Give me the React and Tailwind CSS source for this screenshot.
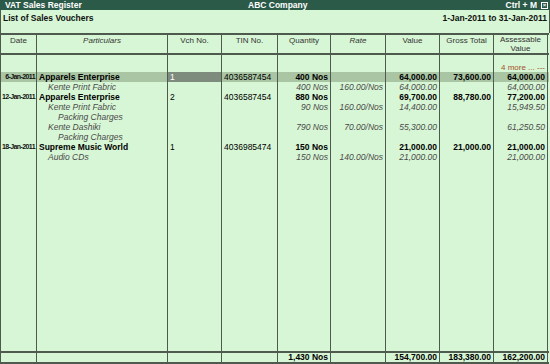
const cols = "grid grid-cols-[36px_131px_54px_56px_53px_55px_54px_54px_54px]";
const cell = "border-r border-[#4d5a4d] overflow-hidden whitespace-nowrap";

const rows = [
    { date: "6-Jan-2011", party: "Apparels Enterprise", vch: "1", tin: "4036587454", qty: "400 Nos", value: "64,000.00", gross: "73,600.00", assess: "64,000.00", bold: true, active: true },
    { party: "Kente Print Fabric", indent: 1, qty: "400 Nos", rate: "160.00/Nos", value: "64,000.00", assess: "64,000.00" },
    { date: "12-Jan-2011", party: "Apparels Enterprise", vch: "2", tin: "4036587454", qty: "880 Nos", value: "69,700.00", gross: "88,780.00", assess: "77,200.00", bold: true },
    { party: "Kente Print Fabric", indent: 1, qty: "90 Nos", rate: "160.00/Nos", value: "14,400.00", assess: "15,949.50" },
    { party: "Packing Charges", indent: 2 },
    { party: "Kente Dashiki", indent: 1, qty: "790 Nos", rate: "70.00/Nos", value: "55,300.00", assess: "61,250.50" },
    { party: "Packing Charges", indent: 2 },
    { date: "18-Jan-2011", party: "Supreme Music World", vch: "1", tin: "4036985474", qty: "150 Nos", value: "21,000.00", gross: "21,000.00", assess: "21,000.00", bold: true },
    { party: "Audio CDs", indent: 1, qty: "150 Nos", rate: "140.00/Nos", value: "21,000.00", assess: "21,000.00" },
];

function Row({ r }) {
    const txt = r.bold ? "font-bold text-black" : "italic text-[#4a4a4a]";
    const pad = r.indent === 2 ? "pl-[21px]" : r.indent === 1 ? "pl-[11px]" : "pl-[2px]";
    return (
        <div className={`${cols} h-[10px] leading-[10px] ${r.active ? "bg-[#a9c5a3]" : ""}`}>
            <div className={`${cell} text-right pr-[1px] tracking-[-0.6px] text-[7px] font-bold text-[#111]`}>{r.date}</div>
            <div className={`${cell} ${pad} ${txt}`}>{r.party}</div>
            <div className={`${cell} pl-[2px] ${r.active ? "bg-[#7e8c7e] text-white" : "text-black"}`}>{r.vch}</div>
            <div className={`${cell} pl-[2px] text-black`}>{r.tin}</div>
            <div className={`${cell} text-right pr-[2px] ${txt}`}>{r.qty}</div>
            <div className={`${cell} text-right pr-[2px] ${txt}`}>{r.rate}</div>
            <div className={`${cell} text-right pr-[2px] ${txt}`}>{r.value}</div>
            <div className={`${cell} text-right pr-[2px] ${txt}`}>{r.gross}</div>
            <div className={`${cell} text-right pr-[2px] ${txt}`}>{r.assess}</div>
        </div>
    );
}

function EmptyCells({ n = 9 }) {
    return (
        <>
            {Array.from({ length: n }).map((_, i) => (
                <div key={i} className={cell} />
            ))}
        </>
    );
}

export default function App() {
    return (
        <div className="w-[550px] h-[364px] bg-[#d7f6d5] flex flex-col text-[8.5px] font-['Liberation_Sans',Arial,sans-serif] text-[#222] overflow-hidden">
            {/* TITLE BAR */}
            <div className="h-[10px] bg-[#2c5a48] text-white font-bold text-[8.5px] leading-[10px] flex items-center pl-[5px] pr-[2px] shrink-0">
                <div className="w-[243px]">VAT Sales Register</div>
                <div className="flex-1">ABC Company</div>
                <div className="mr-[4px]">Ctrl + M</div>
                <div className="w-[7px] h-[7px] border border-white text-[6px] leading-[5px] text-center">×</div>
            </div>

            {/* SUB HEADER */}
            <div className="h-[23px] flex justify-between items-start px-[2px] pt-[2px] font-bold text-[8.5px] text-[#111] border-l border-r border-[#4d5a4d] shrink-0">
                <div>List of Sales Vouchers</div>
                <div>1-Jan-2011 to 31-Jan-2011</div>
            </div>

            {/* TABLE */}
            <div className="flex-1 flex flex-col border-l border-b-2 border-t-2 border-[#4d5a4d] mr-[1px] min-h-0">
                <div className={`${cols} h-[20px] border-b-2 border-[#4d5a4d] text-[#333] text-[8px] text-center leading-[9px] shrink-0`}>
                    <div className={`${cell} pt-[1px]`}>Date</div>
                    <div className={`${cell} pt-[1px] italic`}>Particulars</div>
                    <div className={`${cell} pt-[1px]`}>Vch No.</div>
                    <div className={`${cell} pt-[1px]`}>TIN No.</div>
                    <div className={`${cell} pt-[1px]`}>Quantity</div>
                    <div className={`${cell} pt-[1px] italic`}>Rate</div>
                    <div className={`${cell} pt-[1px]`}>Value</div>
                    <div className={`${cell} pt-[1px]`}>Gross Total</div>
                    <div className={`${cell} pt-0`}>Assessable<br />Value</div>
                </div>

                <div className={`${cols} h-[7px] shrink-0`}><EmptyCells /></div>
                <div className={`${cols} h-[10px] leading-[12px] shrink-0`}>
                    <EmptyCells n={8} />
                    <div className={`${cell} text-right pr-[2px] text-[#a5502b] text-[8px]`}>4 more ... ---</div>
                </div>

                {rows.map((r, i) => (
                    <Row key={i} r={r} />
                ))}

                <div className={`${cols} flex-1`}><EmptyCells /></div>

                {/* TOTALS */}
                <div className={`${cols} h-[11px] leading-[9px] border-t-2 border-[#4d5a4d] font-bold text-black shrink-0`}>
                    <EmptyCells n={4} />
                    <div className={`${cell} text-right pr-[2px]`}>1,430 Nos</div>
                    <div className={cell} />
                    <div className={`${cell} text-right pr-[2px]`}>154,700.00</div>
                    <div className={`${cell} text-right pr-[2px]`}>183,380.00</div>
                    <div className={`${cell} text-right pr-[2px]`}>162,200.00</div>
                </div>
            </div>
        </div>
    );
}
